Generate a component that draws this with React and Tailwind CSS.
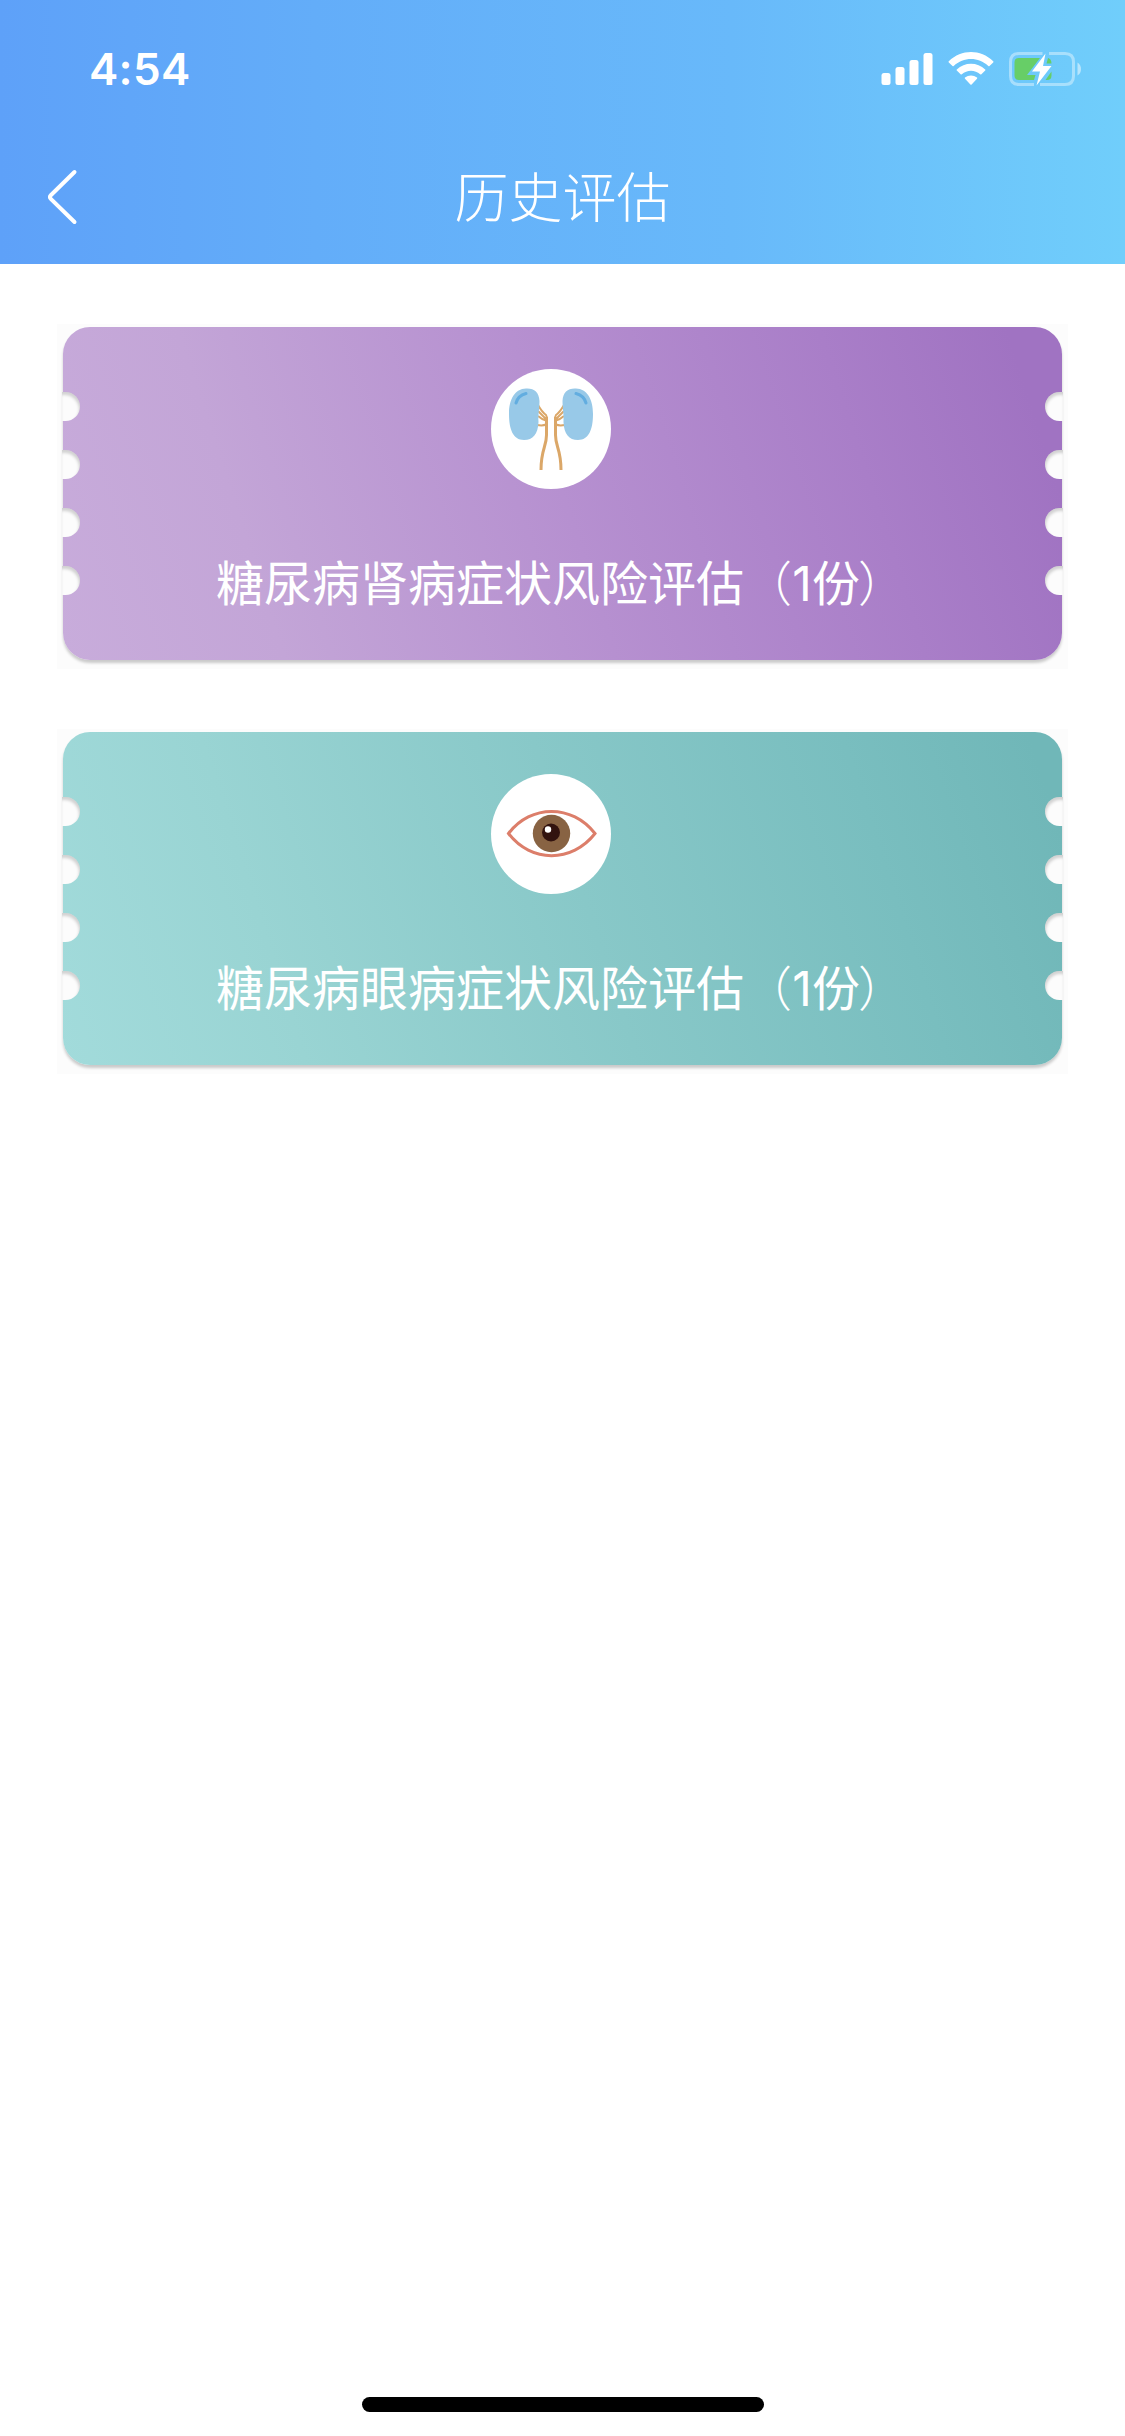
const notches = [0, 1, 2, 3];

function StatusBar() {
  return (
    <div className="flex h-[132px] items-center justify-between pr-[44px] pl-[89px] pt-[6px]">
      <div className="font-['Inter'] text-[44px] leading-none font-semibold tracking-[0.3px]">4:54</div>
      <div className="flex items-center">
        <svg className="h-[34px] w-[52px]" viewBox="0 0 52 34" fill="currentColor">
          <rect x="0.5" y="21" width="9" height="12" rx="2.5" />
          <rect x="14.5" y="15" width="9" height="18" rx="2.5" />
          <rect x="28.5" y="8" width="9" height="25" rx="2.5" />
          <rect x="42.5" y="1" width="9" height="32" rx="2.5" />
        </svg>
        <svg className="ml-[15px] h-[34px] w-[46px]" viewBox="0 0 46 34" fill="currentColor">
          <path d="M0.8 9.2 Q0.2 9.8 0.8 10.4 L4.5 14 Q5.1 14.5 5.7 14 C15.5 4.8 30.5 4.8 40.3 14 Q40.9 14.5 41.5 14 L45.2 10.4 Q45.8 9.8 45.2 9.2 C32.5-3 13.5-3 0.8 9.2Z" />
          <path d="M8.8 17.4 Q8.2 18 8.8 18.6 L12.6 22.3 Q13.2 22.8 13.8 22.3 C19 17.6 27 17.6 32.2 22.3 Q32.8 22.8 33.4 22.3 L37.2 18.6 Q37.8 18 37.2 17.4 C29.4 9.9 16.6 9.9 8.8 17.4Z" />
          <path d="M17 25.6 Q16.4 26.2 17 26.8 L22.4 32.4 Q23 33 23.6 32.4 L29 26.8 Q29.6 26.2 29 25.6 C25.5 22.9 20.5 22.9 17 25.6Z" />
        </svg>
        <svg className="ml-[12px] h-[38px] w-[75px]" viewBox="0 0 75 38" fill="none">
          <path d="M36.500 3.500 H13 Q4.500 3.500 4.500 12 V26 Q4.500 34.500 13 34.500 H28" stroke="white" strokeOpacity="0.4" strokeWidth="3" />
          <path d="M43 3.500 H59 Q67.500 3.500 67.500 12 V26 Q67.500 34.500 59 34.500 H34" stroke="white" strokeOpacity="0.4" strokeWidth="3" />
          <path d="M71.500 12.500 Q75 14.500 75 19 Q75 23.500 71.500 25.500Z" fill="white" fillOpacity="0.5" />
          <path d="M13 8 H34 L21 25 H29.500 L28 30 H13 Q8.500 30 8.500 25.500 V12.500 Q8.500 8 13 8Z" fill="#67ce67" />
          <path d="M42 8 Q45.500 8.800 45.500 13.500 H40.500Z M45.500 21.500 V25.500 Q45.500 30 41 30 H39.500Z" fill="#67ce67" />
          <path d="M39.500 3.500 L26 21.500 H34 L30.500 35.500 L45.500 16 H37Z" fill="white" />
        </svg>
      </div>
    </div>
  );
}

function Header() {
  return (
    <header className="h-[264px] bg-[linear-gradient(90deg,#5ea1f9_0%,#63adf9_28%,#68b9fa_65%,#70cefb_100%)] text-white">
      <StatusBar />
      <div className="grid h-[132px] grid-cols-[1fr_auto_1fr] items-center">
        <svg className="mb-[2px] ml-[46px] h-[56px] w-[33px]" viewBox="0 0 33 56" fill="none" stroke="currentColor" strokeWidth="4" strokeLinecap="round" strokeLinejoin="round">
          <path d="M28.500 3 L4.800 26.200 Q3 28 4.800 29.800 L28.500 53" />
        </svg>
        <h1 className="mb-[6px] font-['Noto_Sans_CJK_SC',sans-serif] text-[54px] leading-none font-light">历史评估</h1>
      </div>
    </header>
  );
}

function KidneyIcon() {
  return (
    <svg className="size-[120px]" viewBox="0 0 120 120" fill="none">
      <g id="kidney">
        <path d="M47 36 Q51 43 55 46 Q56.500 48 56 52 M47 42 L55 50 M47 47 Q51 50.500 55 51.500 M46 56 Q52 57 55 55.500" stroke="#dba768" strokeWidth="2" />
        <path d="M55.500 48 V66 C55.500 78 50 80 50 101" stroke="#dba768" strokeWidth="3" />
        <path d="M35 19.500 C43 19 48 23 48.500 32 C48.500 40 47 45 47.500 53 C47 65 42 71 33 71 C22 71 18 60 18 45 C18 30 24 20 35 19.500Z" fill="#98c9e8" />
        <path d="M25 34 Q27 26.500 35 24.500" stroke="#62ade0" strokeWidth="3" strokeLinecap="round" />
      </g>
      <use href="#kidney" transform="translate(120 0) scale(-1 1)" />
    </svg>
  );
}

function EyeIcon() {
  return (
    <svg className="size-[120px]" viewBox="0 0 120 120" fill="none">
      <path d="M17.500 59.500 C40 30 81 30 104 59.500 C81 89 40 89 17.500 59.500Z" stroke="#dc7e6a" strokeWidth="3" />
      <circle cx="60.500" cy="59.500" r="18.700" fill="#886343" />
      <circle cx="60" cy="58.500" r="9" fill="#32130f" />
      <circle cx="57" cy="55.500" r="3.200" fill="white" />
    </svg>
  );
}

function Ticket({ name, count, gradient, icon }) {
  return (
    <section className="h-[345px] bg-[#fcfcfc] px-[6px] pt-[3px]">
      <div className={"relative flex h-[333px] flex-col items-center rounded-[27px] shadow-[0_3px_3px_rgba(0,0,0,0.2)] " + gradient}>
        <div className="absolute top-[65px] left-[-1px] flex flex-col gap-[29px]">
          {notches.map((n) => (
            <div key={n} className="h-[29px] w-[18px] rounded-r-[14.500px] bg-[#fcfcfc] shadow-[inset_-1px_3px_3px_rgba(0,0,0,0.17)]" />
          ))}
        </div>
        <div className="absolute top-[65px] right-[-1px] flex flex-col gap-[29px]">
          {notches.map((n) => (
            <div key={n} className="h-[29px] w-[18px] rounded-l-[14.500px] bg-[#fcfcfc] shadow-[inset_1px_3px_3px_rgba(0,0,0,0.17)]" />
          ))}
        </div>
        <div className="mt-[42px] mr-[24px] size-[120px] rounded-full bg-white">{icon}</div>
        <p className="mt-[67px] ml-[153px] self-start font-['Noto_Sans_CJK_SC',sans-serif] text-[48px] leading-none font-normal whitespace-nowrap text-white">
          {name}<span className="font-light">（</span><span className="inline-block w-[20px] text-center font-['Inter'] font-normal">{count}</span>份<span className="-ml-[2px] font-light">）</span>
        </p>
      </div>
    </section>
  );
}

export default function App() {
  return (
    <div className="flex h-[2436px] w-[1125px] flex-col bg-white">
      <Header />
      <main className="flex flex-1 flex-col gap-[60px] px-[57px] pt-[60px]">
        <Ticket
          name="糖尿病肾病症状风险评估"
          count={1}
          gradient="bg-[linear-gradient(72deg,#c8acdb_0%,#c3a5d7_20%,#b690d0_50%,#a97ec8_78%,#a073c2_95%,#a073c2_100%)]"
          icon={<KidneyIcon />}
        />
        <Ticket
          name="糖尿病眼病症状风险评估"
          count={1}
          gradient="bg-[linear-gradient(72deg,#a2dbdb_0%,#99d4d3_22%,#88c8c8_52%,#79bebf_80%,#70b7b8_97%,#70b7b8_100%)]"
          icon={<EyeIcon />}
        />
      </main>
      <div className="mx-auto mb-[24px] h-[15px] w-[402px] rounded-full bg-black" />
    </div>
  );
}
